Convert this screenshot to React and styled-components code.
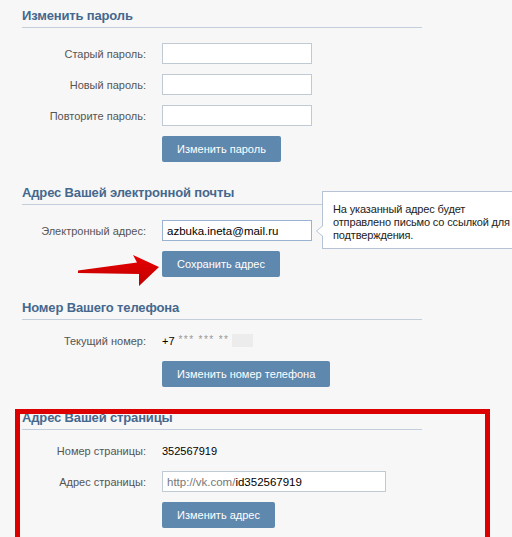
import React from 'react';
import styled, { createGlobalStyle } from 'styled-components';

const GlobalStyle = createGlobalStyle`
  html, body {
    margin: 0;
    padding: 0;
    background: #f7f7f7;
    overflow: hidden;
  }
  body {
    font-family: "Liberation Sans", Arial, sans-serif;
    font-size: 11px;
    color: #000;
  }
`;

const Page = styled.div`
  width: 400px;
  padding: 8px 0 0 22px;
`;

const Section = styled.div`
  position: relative;
  margin-bottom: 23px;
`;

const Title = styled.div`
  font-size: 13px;
  font-weight: bold;
  line-height: 16px;
  color: #45688e;
  letter-spacing: -0.15px;
  padding-bottom: 3px;
  border-bottom: 1px solid #c3cedc;
  margin-bottom: ${(p) => p.$gap}px;
`;

const Rows = styled.div`
  display: flex;
  flex-direction: column;
  gap: 10px;
`;

const Row = styled.div`
  display: grid;
  grid-template-columns: 124px auto;
  column-gap: 16px;
  align-items: center;
  justify-items: start;
  min-height: 21px;
`;

const Label = styled.div`
  justify-self: end;
  color: #555;
  white-space: nowrap;
`;

const Value = styled.div`
  color: #000;
  font-size: 11px;
  white-space: nowrap;
`;

const Input = styled.div`
  box-sizing: border-box;
  width: ${(p) => p.$width || 150}px;
  height: 21px;
  background: #fff;
  border: 1px solid ${(p) => (p.$focus ? '#9ab3d3' : '#c0cad5')};
  padding: 0 4px;
  display: flex;
  align-items: center;
  font-size: 11.5px;
  color: #000;
  white-space: nowrap;
`;

const Muted = styled.span`
  color: #777;
`;

const Button = styled.div`
  height: 26px;
  padding: 0 15px;
  display: flex;
  align-items: center;
  background: #5f88ae;
  border-radius: 2px;
  color: #fff;
  font-size: 11px;
  white-space: nowrap;
`;

const Stars = styled.span`
  color: #999;
  font-size: 10px;
  letter-spacing: 1.4px;
  vertical-align: 2px;
  margin-left: 4px;
`;

const Hidden = styled.span`
  display: inline-block;
  width: 21px;
  height: 13px;
  margin-left: 3px;
  vertical-align: -2px;
  background: #ececec;
  filter: blur(0.6px);
`;

const Tooltip = styled.div`
  position: absolute;
  left: 300px;
  top: 6px;
  width: 190px;
  padding: 11px 10px 6px 10px;
  background: #fff;
  border: 1px solid #b5c3d4;
  line-height: 13px;
  letter-spacing: -0.15px;
  color: #222;

  &::before,
  &::after {
    content: '';
    position: absolute;
    top: 33px;
    border-style: solid;
    border-color: transparent;
  }
  &::before {
    left: -7px;
    border-width: 6px 7px 6px 0;
    border-right-color: #b5c3d4;
  }
  &::after {
    left: -6px;
    top: 34px;
    border-width: 5px 6px 5px 0;
    border-right-color: #fff;
  }
`;

const Arrow = styled.svg`
  position: absolute;
  left: 54px;
  top: 67px;
`;

const Marker = styled.div`
  position: absolute;
  left: -7px;
  top: -1px;
  width: 475px;
  height: 150px;
  box-sizing: border-box;
  border: 5px solid #dd0000;
  pointer-events: none;
`;

const RedArrow = () => (
  <Arrow width="90" height="40" viewBox="76 252 90 40">
    <defs>
      <linearGradient id="ar" x1="0" y1="0" x2="0" y2="1">
        <stop offset="0" stopColor="#e80000" />
        <stop offset="1" stopColor="#c00000" />
      </linearGradient>
    </defs>
    <path
      d="M78 270.5 L137 262.5 L133 255 L159 267 L139 286 L139 274 L78 273 Z"
      fill="url(#ar)"
    />
  </Arrow>
);

export default function App() {
  return (
    <>
      <GlobalStyle />
      <Page>
        <Section>
          <Title $gap={15}>Изменить пароль</Title>
          <Rows>
            <Row>
              <Label>Старый пароль:</Label>
              <Input />
            </Row>
            <Row>
              <Label>Новый пароль:</Label>
              <Input />
            </Row>
            <Row>
              <Label>Повторите пароль:</Label>
              <Input />
            </Row>
            <Row>
              <span />
              <Button>Изменить пароль</Button>
            </Row>
          </Rows>
        </Section>

        <Section>
          <Title $gap={15}>Адрес Вашей электронной почты</Title>
          <Rows>
            <Row>
              <Label>Электронный адрес:</Label>
              <Input $focus>azbuka.ineta@mail.ru</Input>
            </Row>
            <Row>
              <span />
              <Button>Сохранить адрес</Button>
            </Row>
          </Rows>
          <Tooltip>
            На указанный адрес будет отправлено письмо со ссылкой для подтверждения.
          </Tooltip>
          <RedArrow />
        </Section>

        <Section>
          <Title $gap={10}>Номер Вашего телефона</Title>
          <Rows>
            <Row>
              <Label>Текущий номер:</Label>
              <Value>
                +7<Stars>*** *** **</Stars>
                <Hidden />
              </Value>
            </Row>
            <Row>
              <span />
              <Button>Изменить номер телефона</Button>
            </Row>
          </Rows>
        </Section>

        <Section>
          <Title $gap={10}>Адрес Вашей страницы</Title>
          <Rows>
            <Row>
              <Label>Номер страницы:</Label>
              <Value>352567919</Value>
            </Row>
            <Row>
              <Label>Адрес страницы:</Label>
              <Input $width={224}>
                <Muted>http://vk.com/</Muted>id352567919
              </Input>
            </Row>
            <Row>
              <span />
              <Button>Изменить адрес</Button>
            </Row>
          </Rows>
          <Marker />
        </Section>
      </Page>
    </>
  );
}
